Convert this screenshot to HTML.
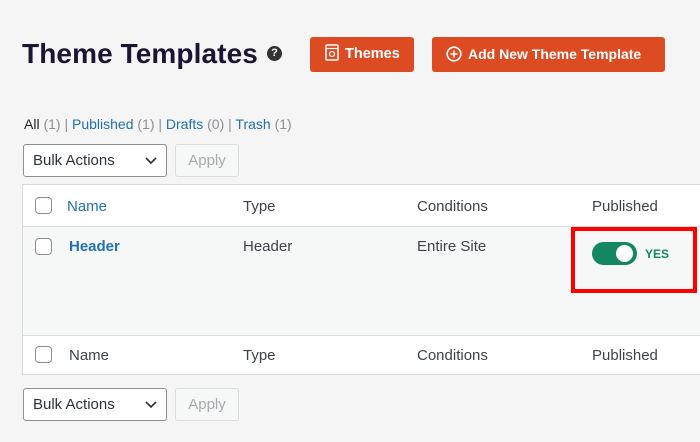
<!DOCTYPE html><html><head><style>
body{margin:0;width:700px;height:442px;background:#f5f5f5;font-family:"Liberation Sans",sans-serif;position:relative;overflow:hidden;color:#3c434a}
.a{position:absolute}
h1{position:absolute;left:22px;top:38px;margin:0;font-size:28px;font-weight:bold;color:#1d1433;letter-spacing:0.1px}
.btn{position:absolute;top:37px;height:35px;background:#dd4b22;border-radius:3px;color:#fff;font-size:15px;line-height:35px;box-sizing:border-box}
.sel{position:absolute;left:23px;width:144px;height:33px;border:1px solid #8c8f94;border-radius:3px;background:#fff;box-sizing:border-box;font-size:15px;line-height:31px;padding-left:9px;color:#2c3338}
.ap{position:absolute;left:175px;width:64px;height:33px;border:1px solid #dcdcde;border-radius:3px;background:#f6f7f7;box-sizing:border-box;color:#a7aaad;font-size:15px;line-height:31px;text-align:center}
.cb{position:absolute;left:35px;width:17px;height:17px;border:1px solid #8c8f94;border-radius:4px;background:#fff;box-sizing:border-box}
.t{position:absolute;font-size:15px}
a{color:#2271b1;text-decoration:none}
</style></head><body>
<h1>Theme Templates</h1>
<div class="a" style="left:267px;top:46px;width:15px;height:15px;border-radius:50%;background:#333;color:#fff;font-size:11px;font-weight:bold;text-align:center;line-height:15px">?</div>
<div class="btn" style="left:310px;width:104px;padding-left:15px;font-weight:bold;font-size:14.5px"><svg width="14" height="17" viewBox="0 0 14 17" style="vertical-align:-3px;margin-right:6px"><rect x="1" y="1" width="12" height="15" rx="1" fill="none" stroke="#fff" stroke-width="1.5"/><line x1="1" y1="4.5" x2="13" y2="4.5" stroke="#fff" stroke-width="1.2"/><circle cx="7" cy="10" r="2.5" fill="none" stroke="#fff" stroke-width="1.2"/></svg>Themes</div>
<div class="btn" style="left:432px;width:233px;padding-left:14px;font-weight:bold;font-size:14px"><svg width="16" height="16" viewBox="0 0 16 16" style="vertical-align:-3px;margin-right:6px"><circle cx="8" cy="8" r="6.8" fill="none" stroke="#fff" stroke-width="1.6"/><path d="M8 4.5v7M4.5 8h7" stroke="#fff" stroke-width="1.6"/></svg>Add New Theme Template</div>
<div class="t" style="left:24px;top:116px;font-size:14px;color:#8c8f94"><span style="color:#1d2327">All</span> (1) | <a>Published</a> (1) | <a>Drafts</a> (0) | <a>Trash</a> (1)</div>
<div class="sel" style="top:144px">Bulk Actions<svg class="a" style="right:9px;top:12px" width="12" height="8" viewBox="0 0 12 8"><path d="M1 1l5 5 5-5" fill="none" stroke="#2c3338" stroke-width="1.6"/></svg></div>
<div class="ap" style="top:144px">Apply</div>
<div class="a" style="left:22px;top:184px;width:690px;height:191px;border:1px solid #dcdcde;background:#fff;box-sizing:border-box"></div>
<div class="a" style="left:23px;top:226px;width:680px;height:108px;background:#f6f7f7;border-top:1px solid #dcdcde;border-bottom:1px solid #dcdcde"></div>
<div class="cb" style="top:197px"></div>
<div class="t" style="left:67px;top:198px"><a>Name</a></div>
<div class="t" style="left:243px;top:198px">Type</div>
<div class="t" style="left:417px;top:198px">Conditions</div>
<div class="t" style="left:592px;top:198px">Published</div>
<div class="cb" style="top:238px"></div>
<div class="t" style="left:69px;top:238px;font-weight:bold"><a>Header</a></div>
<div class="t" style="left:243px;top:238px;font-size:15px">Header</div>
<div class="t" style="left:417px;top:238px;font-size:15px">Entire Site</div>
<div class="a" style="left:571px;top:227px;width:126px;height:66px;border:4px solid #f00;box-sizing:border-box"></div>
<div class="a" style="left:592px;top:242px;width:45px;height:23px;border-radius:12px;background:#128761"><div class="a" style="left:24px;top:3px;width:17px;height:17px;border-radius:50%;background:#fff"></div></div>
<div class="a" style="left:645px;top:247px;font-size:12px;font-weight:bold;color:#128761">YES</div>
<div class="cb" style="top:346px"></div>
<div class="t" style="left:69px;top:347px">Name</div>
<div class="t" style="left:243px;top:347px">Type</div>
<div class="t" style="left:417px;top:347px">Conditions</div>
<div class="t" style="left:592px;top:347px">Published</div>
<div class="sel" style="top:388px">Bulk Actions<svg class="a" style="right:9px;top:12px" width="12" height="8" viewBox="0 0 12 8"><path d="M1 1l5 5 5-5" fill="none" stroke="#2c3338" stroke-width="1.6"/></svg></div>
<div class="ap" style="top:388px">Apply</div>
</body></html>
